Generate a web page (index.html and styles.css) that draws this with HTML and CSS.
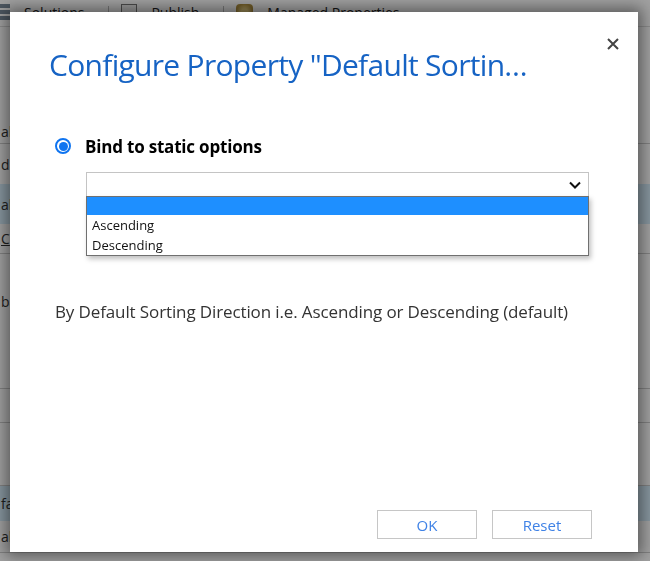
FILE: index.html
```html
<!DOCTYPE html>
<html>
<head>
<meta charset="utf-8">
<link rel="stylesheet" href="styles.css">
</head>
<body>
<div class="page">
  <div class="toolbar">
    <span class="tb-icon list"><i></i><i></i><i></i></span>
    <span class="tb-text">Solutions</span>
    <span class="tb-sep"></span>
    <span class="tb-icon doc"></span>
    <span class="tb-text">Publish</span>
    <span class="tb-sep"></span>
    <span class="tb-icon gear"></span>
    <span class="tb-text">Managed Properties</span>
  </div>
  <div class="rows">
    <div class="row h92"></div>
    <div class="row h25 line"><span>al</span></div>
    <div class="row h40"><span>d</span></div>
    <div class="row h40 sel"><span>ab</span></div>
    <div class="row h30 line"><span class="u">C</span></div>
    <div class="row h95"><span>ba</span></div>
    <div class="row h40 line"></div>
    <div class="row h34 line"></div>
    <div class="row h63 line"></div>
    <div class="row h35 sel"><span>fa</span></div>
    <div class="row h32 line"><span>ab</span></div>
    <div class="row h8"></div>
  </div>
</div>
<div class="overlay"></div>

<div class="dialog">
  <button class="close" aria-label="Close">
    <svg width="12" height="12" viewBox="0 0 12 12"><path d="M1 1 L11 11 M11 1 L1 11" stroke="#444" stroke-width="2" fill="none"/></svg>
  </button>
  <h1 class="title">Configure Property "Default Sortin…</h1>
  <div class="option">
    <span class="radio"><span class="dot"></span></span>
    <span class="option-label">Bind to static options</span>
  </div>
  <div class="select-wrap">
    <div class="select">
      <svg class="chev" width="12" height="8" viewBox="0 0 12 8"><path d="M1 1.5 L6 6.5 L11 1.5" stroke="#111" stroke-width="2" fill="none"/></svg>
    </div>
    <ul class="listbox">
      <li class="hl">&nbsp;</li>
      <li>Ascending</li>
      <li>Descending</li>
    </ul>
  </div>
  <p class="desc">By Default Sorting Direction i.e. Ascending or Descending (default)</p>
  <div class="footer">
    <button class="btn">OK</button>
    <button class="btn">Reset</button>
  </div>
</div>
</body>
</html>
```
FILE: styles.css
```css
html, body {
  margin: 0;
  padding: 0;
  width: 650px;
  height: 561px;
  overflow: hidden;
  font-family: "Open Sans", "Noto Sans", sans-serif;
}

.page {
  width: 650px;
  height: 561px;
  background: #fff;
  color: #333;
  overflow: hidden;
}

.toolbar {
  height: 27px;
  border-bottom: 1px solid #ddd;
  display: flex;
  align-items: flex-start;
  padding-top: 6px;
  box-sizing: border-box;
  font-size: 14px;
  color: #222;
}
.tb-icon { display: inline-block; }
.tb-icon.list {
  width: 10px;
  display: flex;
  flex-direction: column;
  gap: 2px;
  margin-top: -2px;
}
.tb-icon.list i {
  display: block;
  width: 10px;
  height: 4px;
  background: #7a8a9a;
}
.tb-text { margin-left: 14px; line-height: 14px; }
.tb-sep {
  width: 1px;
  height: 20px;
  background: #bbb;
  margin: 0 12px 0 24px;
}
.tb-icon.doc {
  width: 14px;
  height: 18px;
  border: 1px solid #777;
  background: #f4f4f4;
  margin-top: -2px;
}
.tb-icon.gear {
  width: 17px;
  height: 17px;
  border-radius: 4px;
  background: radial-gradient(circle, #e8d080 30%, #b09040 70%);
  margin-top: -2px;
}

.rows { font-size: 14px; }
.row {
  box-sizing: border-box;
  padding-left: 1px;
  display: flex;
  align-items: center;
}
.row.line { border-bottom: 1px solid #ccc; }
.row.sel { background: #d6eefc; }
.row .u { text-decoration: underline; }
.h8 { height: 8px; }
.h25 { height: 25px; }
.h30 { height: 30px; }
.h32 { height: 32px; }
.h34 { height: 34px; }
.h35 { height: 35px; }
.h40 { height: 40px; }
.h63 { height: 63px; }
.h92 { height: 92px; }
.h95 { height: 95px; }

.overlay {
  position: fixed;
  inset: 0;
  background: rgba(0, 0, 0, 0.37);
}

.dialog {
  position: absolute;
  left: 10px;
  top: 12px;
  width: 628px;
  height: 540px;
  background: #fff;
  box-shadow: 0 0 14px 4px rgba(0, 0, 0, 0.45);
  box-sizing: border-box;
  padding: 35px 46px 13px 39px;
  display: flex;
  flex-direction: column;
}

.close {
  position: absolute;
  right: 18px;
  top: 25px;
  width: 14px;
  height: 14px;
  padding: 0;
  border: 0;
  background: none;
  display: flex;
  align-items: center;
  justify-content: center;
}

.title {
  margin: 0;
  font-weight: 400;
  font-size: 30px;
  line-height: 36px;
  color: #1663c4;
  white-space: nowrap;
  letter-spacing: -0.7px;
}

.option {
  margin-top: 52px;
  margin-left: 6px;
  display: flex;
  align-items: center;
  height: 22px;
}
.radio {
  width: 16px;
  height: 16px;
  border: 2px solid #0f74f0;
  border-radius: 50%;
  box-sizing: border-box;
  display: flex;
  align-items: center;
  justify-content: center;
}
.radio .dot {
  width: 9px;
  height: 9px;
  border-radius: 50%;
  background: #0f74f0;
}
.option-label {
  margin-left: 14px;
  font-weight: 700;
  font-size: 17px;
  color: #000;
  letter-spacing: -0.2px;
}

.select-wrap {
  position: relative;
  margin-top: 15px;
  margin-left: 37px;
  width: 503px;
}
.select {
  height: 26px;
  border: 1px solid #c4c4c4;
  box-sizing: border-box;
  display: flex;
  align-items: center;
  justify-content: flex-end;
  padding-right: 7px;
}
.listbox {
  position: absolute;
  left: 0;
  top: 24px;
  width: 503px;
  margin: 0;
  padding: 0;
  list-style: none;
  background: #fff;
  border: 1px solid #707070;
  box-sizing: border-box;
  box-shadow: 2px 3px 5px rgba(0, 0, 0, 0.25);
  font-size: 13px;
  color: #111;
}
.listbox li {
  height: 20px;
  line-height: 20px;
  padding-left: 5px;
}
.listbox li.hl {
  height: 18px;
  background: #1e8fff;
}

.desc {
  margin: 103px 0 0 6px;
  font-size: 17px;
  line-height: 22px;
  color: #333;
  letter-spacing: -0.12px;
}

.footer {
  margin-top: auto;
  display: flex;
  justify-content: flex-end;
  gap: 15px;
}
.btn {
  width: 100px;
  height: 29px;
  border: 1px solid #c6c6c6;
  background: #fff;
  color: #3f82e6;
  font-family: "Open Sans", "Noto Sans", sans-serif;
  font-size: 15px;
  padding: 0;
}
```
